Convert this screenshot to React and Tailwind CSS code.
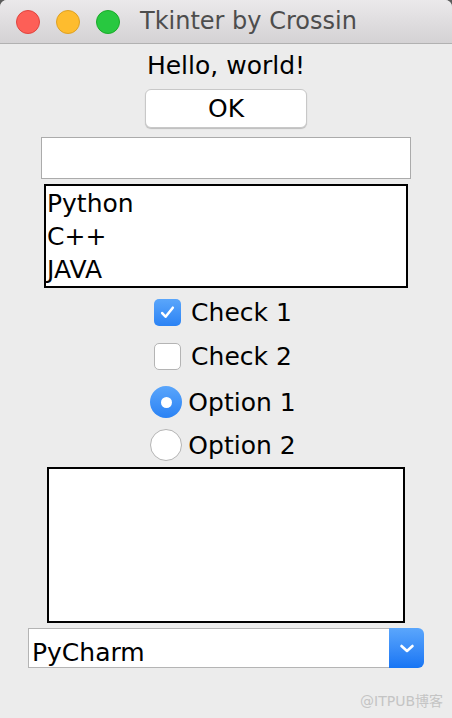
const font = { fontFamily: '"DejaVu Sans", "Noto Sans CJK SC", sans-serif' }

const CheckRow = ({ checked, label }) => (
  <div className="flex h-[44px] items-center gap-[10px]">
    {checked ? (
      <div className="flex h-[27px] w-[27px] items-center justify-center rounded-[5px] bg-gradient-to-b from-[#5aa6fb] to-[#2a82f4]">
        <svg width="17" height="17" viewBox="0 0 16 16" fill="none" stroke="white" strokeWidth="2.4" strokeLinecap="round" strokeLinejoin="round">
          <path d="M3 8.5l3.2 3.5L13 3.5" />
        </svg>
      </div>
    ) : (
      <div className="h-[27px] w-[27px] rounded-[5px] border border-[#b4b4b4] bg-white" />
    )}
    <span className="text-[25px] leading-[29px] text-black">{label}</span>
  </div>
)

const RadioRow = ({ checked, label, className = 'h-[44px]' }) => (
  <div className={`flex ${className} items-center gap-[6px]`}>
    {checked ? (
      <div className="flex h-[32px] w-[32px] items-center justify-center rounded-full bg-gradient-to-b from-[#59a5fb] to-[#2a82f4]">
        <div className="h-[11px] w-[11px] rounded-full bg-white" />
      </div>
    ) : (
      <div className="h-[32px] w-[32px] rounded-full border border-[#b4b4b4] bg-white" />
    )}
    <span className="text-[25px] leading-[29px] text-black">{label}</span>
  </div>
)

export default function App() {
  return (
    <div className="relative h-[718px] w-[452px] overflow-hidden bg-[#5c5c5c]" style={font}>
      <div className="flex h-full flex-col rounded-t-[7px] bg-[#ececec] overflow-hidden">
        {/* Title bar */}
        <div className="flex h-[44px] shrink-0 items-center border-b border-[#b1b1b1] bg-gradient-to-b from-[#ebe9eb] to-[#d4d2d4] pl-[16px]">
          <div className="flex gap-[16px]">
            <div className="h-[24px] w-[24px] rounded-full border border-[#e0443e] bg-[#fd5f57]" />
            <div className="h-[24px] w-[24px] rounded-full border border-[#dea123] bg-[#febc2e]" />
            <div className="h-[24px] w-[24px] rounded-full border border-[#1aab29] bg-[#28c840]" />
          </div>
          <span className="ml-[20px] text-[24px] leading-[29px] text-[#4d4d4d]">Tkinter by Crossin</span>
        </div>

        {/* Body */}
        <div className="flex flex-col items-center">
          <div className="mt-[7px] text-[25px] leading-[29px] text-black">Hello, world!</div>

          <button className="mt-[9px] flex h-[39px] w-[162px] items-center justify-center rounded-[6px] border border-[#c8c8c8] bg-white text-[25px] leading-[29px] text-black shadow-[0_1px_1px_rgba(0,0,0,0.2)]">
            OK
          </button>

          <div className="mt-[9px] h-[42px] w-[370px] border border-[#ababab] bg-white" />

          <div className="mt-[5px] h-[104px] w-[364px] overflow-hidden border-2 border-black bg-white pl-px pt-px text-[25px] leading-[33px] text-black">
            <div>Python</div>
            <div>C++</div>
            <div>JAVA</div>
          </div>

          <div className="mt-[2px] mr-[6px] flex flex-col items-center">
            <CheckRow checked label="Check 1" />
            <CheckRow label="Check 2" />
            <div className="h-[2px]" />
            <RadioRow checked label="Option 1" />
            <RadioRow label="Option 2" className="h-[42px]" />
          </div>

          <div className="mt-px h-[156px] w-[358px] border-2 border-black bg-white" />

          <div className="mt-[5px] flex h-[40px] w-[396px]">
            <div className="flex flex-1 items-end border border-r-0 border-[#b4b4b4] bg-white pl-[3px] text-[25px] leading-[29px] text-black">
              PyCharm
            </div>
            <div className="flex w-[35px] items-center justify-center rounded-r-[6px] bg-gradient-to-b from-[#5aa6fc] to-[#1675f4]">
              <svg width="16" height="11" viewBox="0 0 16 11" fill="none" stroke="white" strokeWidth="2.6" strokeLinecap="round" strokeLinejoin="round">
                <path d="M2.5 3l5.5 5 5.5-5" />
              </svg>
            </div>
          </div>
        </div>
      </div>

      <span className="absolute bottom-[8px] right-[9px] text-[14px] leading-[17px] text-[#c4c4c4]">@ITPUB博客</span>
    </div>
  )
}
